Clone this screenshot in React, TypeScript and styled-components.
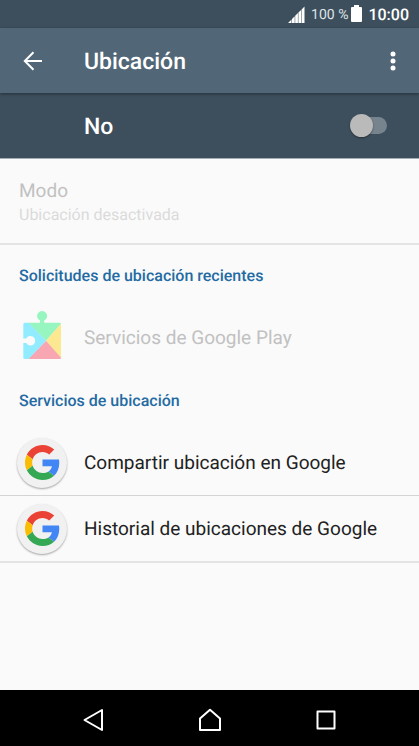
import React from "react";
import styled, { createGlobalStyle } from "styled-components";

const GlobalStyle = createGlobalStyle`
  *, *::before, *::after { box-sizing: border-box; }
  body {
    margin: 0;
    background: #fafafa;
    font-family: Roboto, "Liberation Sans", sans-serif;
    text-rendering: geometricPrecision;
  }
  h1, h2, p, ul { margin: 0; padding: 0; }
`;

const Screen = styled.div`
  display: flex;
  flex-direction: column;
  min-height: 100vh;
`;

const StatusBar = styled.div`
  display: flex;
  align-items: center;
  justify-content: flex-end;
  height: 28px;
  padding: 0 10px;
  background: #3d4f5d;
  color: #fff;
`;

const Battery = styled.span`
  margin: 0 3px 0 6px;
  padding-top: 2px;
  font-size: 14px;
  line-height: 24px;
  color: #dfe3e6;
`;

const Clock = styled.time`
  margin-left: 6px;
  padding-top: 2px;
  font-size: 16px;
  font-weight: 500;
  line-height: 24px;
`;

const AppBar = styled.header`
  z-index: 1;
  display: flex;
  align-items: center;
  height: 65px;
  padding: 0 16px;
  background: #516777;
  color: #fff;
  box-shadow: 0 1px 3px rgba(0, 0, 0, 0.4);
`;

const Title = styled.h1`
  flex: 1;
  padding: 2px 0 0 34px;
  font-size: 23px;
  font-weight: 500;
  line-height: 32px;
`;

const IconButton = styled.button`
  display: flex;
  align-items: center;
  justify-content: center;
  width: ${(p: { $width: number }) => p.$width}px;
  height: 48px;
  padding: 0;
  border: 0;
  background: none;
  color: #fff;
  cursor: pointer;
`;

const SwitchBar = styled.label`
  display: flex;
  align-items: center;
  justify-content: space-between;
  height: 66px;
  padding: 0 32px 0 84px;
  border-bottom: 1px solid #a3adb5;
  background: #3d4f5d;
  color: #fff;
`;

const SwitchText = styled.span`
  padding-top: 2px;
  font-size: 23px;
  font-weight: 500;
  line-height: 32px;
`;

const Switch = styled.input`
  appearance: none;
  display: flex;
  align-items: center;
  width: 34px;
  height: 17px;
  margin: 0;
  border-radius: 9px;
  background: #77838d;
  cursor: pointer;

  &::before {
    content: "";
    flex: none;
    width: 23px;
    height: 23px;
    margin-left: -3px;
    border-radius: 50%;
    background: #bababa;
    box-shadow: 0 1px 2px rgba(0, 0, 0, 0.4);
  }
  &:checked::before { margin-left: 14px; }
`;

const Main = styled.main`
  flex: 1;
`;

const ModeRow = styled.button`
  display: flex;
  flex-direction: column;
  justify-content: center;
  width: 100%;
  height: 86px;
  padding: 3px 19px 0;
  border: 0;
  border-bottom: 2px solid #e4e4e4;
  background: none;
  font-family: inherit;
  text-align: left;
  text-rendering: inherit;
`;

const ModeName = styled.span`
  font-size: 19px;
  line-height: 24px;
  color: #c1c1c1;
`;

const ModeValue = styled.span`
  font-size: 16px;
  line-height: 24px;
  color: #dadada;
`;

const Category = styled.h2`
  padding: 2px 19px 0;
  font-size: 16px;
  font-weight: 500;
  line-height: 58px;
  color: #246ba3;
`;

const List = styled.ul`
  list-style: none;
`;

const Item = styled.li<{ $divider?: string }>`
  border-bottom: ${(p) => p.$divider ?? "0"};
`;

const ItemButton = styled.button`
  display: flex;
  align-items: center;
  gap: 16px;
  width: 100%;
  height: 65px;
  padding: 0 16px;
  border: 0;
  background: none;
  color: #212121;
  font-family: inherit;
  font-size: 19px;
  line-height: 24px;
  text-align: left;
  text-rendering: inherit;
  cursor: pointer;

  &:disabled {
    color: #c1c1c1;
    cursor: default;
  }
`;

const IconSlot = styled.span`
  display: flex;
  flex: none;
  align-items: center;
  justify-content: center;
  width: 52px;
`;

const Disc = styled.span`
  display: flex;
  align-items: center;
  justify-content: center;
  width: 50px;
  height: 50px;
  border-radius: 50%;
  background: #f1f1f1;
  box-shadow: 0 1px 2px rgba(0, 0, 0, 0.35);
`;

const NavBar = styled.nav`
  display: flex;
  align-items: center;
  justify-content: center;
  gap: 68px;
  height: 56px;
  padding-top: 3px;
  background: #000;
`;

const SignalIcon = () => (
  <svg width="17" height="17" viewBox="0 0 17 17" fill="#fff" aria-hidden="true">
    <path d="M0 17 3.500 13.500V17ZM4 13 6.700 10.300V17H4ZM7.200 9.800 9.900 7.100V17H7.200ZM10.400 6.600 13.100 3.900V17H10.400ZM13.600 3.400 16.500 .500V17H13.600Z" />
  </svg>
);

const BatteryIcon = () => (
  <svg width="11" height="18" viewBox="0 0 11 18" fill="#fff" aria-hidden="true">
    <path d="M3 0H8V2H10Q11 2 11 3V16Q11 17 10 17H1Q0 17 0 16V3Q0 2 1 2H3Z" />
  </svg>
);

const BackArrow = () => (
  <svg width="20" height="20" viewBox="0 0 20 20" fill="none" stroke="#fff" strokeWidth="2" aria-hidden="true">
    <path d="M19 10H2M10.500 1.200 1.800 10 10.500 18.800" />
  </svg>
);

const MoreIcon = () => (
  <svg width="6" height="20" viewBox="0 0 6 20" fill="#fff" aria-hidden="true">
    <circle cx="3" cy="3" r="2.500" />
    <circle cx="3" cy="10" r="2.500" />
    <circle cx="3" cy="17" r="2.500" />
  </svg>
);

const PlayServicesIcon = () => (
  <svg width="40" height="56" viewBox="0 0 40 56" aria-hidden="true">
    <path fill="#97f5c0" d="M6 12.700H18V10.600A5 5 0 1 1 22.200 10.600V12.700H37.500Q39 12.700 39 14L24 30.700Z" />
    <path fill="#fde892" d="M39 13.500V49L24 30.700Z" />
    <path fill="#f8a6b1" d="M6 49 24 30.700 39 47.800Q39 49 37.500 49Z" />
    <path fill="#92ecff" d="M6.500 12.700 24 30.700 6.500 49H2.800Q1.300 49 1.300 47.500V33H4.200A4.800 4.800 0 1 0 4.200 28.400H1.300V14.200Q1.300 12.700 2.800 12.700Z" />
  </svg>
);

const GoogleIcon = () => (
  <svg width="35" height="35" viewBox="0 0 48 48" aria-hidden="true">
    <path fill="#EA4335" d="M24 9.500c3.540 0 6.710 1.220 9.210 3.600l6.850-6.850C35.900 2.380 30.470 0 24 0 14.620 0 6.510 5.380 2.560 13.220l7.980 6.190C12.430 13.720 17.740 9.500 24 9.500z" />
    <path fill="#4285F4" d="M46.980 24.550c0-1.570-.15-3.090-.38-4.550H24v9.020h12.940c-.58 2.960-2.260 5.480-4.780 7.180l7.730 6c4.510-4.180 7.090-10.360 7.090-17.650z" />
    <path fill="#FBBC05" d="M10.530 28.590c-.48-1.450-.76-2.990-.76-4.590s.27-3.140.76-4.590l-7.980-6.190C.92 16.460 0 20.120 0 24c0 3.880.92 7.540 2.560 10.780l7.970-6.190z" />
    <path fill="#34A853" d="M24 48c6.480 0 11.930-2.130 15.890-5.810l-7.730-6c-2.150 1.450-4.920 2.300-8.160 2.300-6.260 0-11.570-4.220-13.470-9.910l-7.980 6.190C6.510 42.620 14.620 48 24 48z" />
  </svg>
);

const NavIcon = ({ d }: { d: string }) => (
  <svg width="24" height="24" viewBox="0 0 24 24" fill="none" stroke="#fff" strokeWidth="2" strokeLinejoin="round" aria-hidden="true">
    <path d={d} />
  </svg>
);

const navItems = [
  { label: "Atrás", d: "M20 2V22L2.500 12Z" },
  { label: "Inicio", d: "M12 1.800 22 10.500V22H2V10.500Z" },
  { label: "Recientes", d: "M3.500 3.500H20.500V20.500H3.500Z" },
];

const services = [
  { name: "Compartir ubicación en Google", divider: "1px solid #d4d4d4" },
  { name: "Historial de ubicaciones de Google", divider: "2px solid #e4e4e4" },
];

export default function App() {
  return (
    <Screen>
      <GlobalStyle />
      <StatusBar>
        <SignalIcon />
        <Battery>100 %</Battery>
        <BatteryIcon />
        <Clock>10:00</Clock>
      </StatusBar>
      <AppBar>
        <IconButton $width={34} aria-label="Volver">
          <BackArrow />
        </IconButton>
        <Title>Ubicación</Title>
        <IconButton $width={20} aria-label="Más opciones">
          <MoreIcon />
        </IconButton>
      </AppBar>
      <SwitchBar htmlFor="location">
        <SwitchText>No</SwitchText>
        <Switch id="location" type="checkbox" role="switch" />
      </SwitchBar>
      <Main>
        <ModeRow disabled>
          <ModeName>Modo</ModeName>
          <ModeValue>Ubicación desactivada</ModeValue>
        </ModeRow>
        <Category>Solicitudes de ubicación recientes</Category>
        <List>
          <Item>
            <ItemButton disabled>
              <IconSlot>
                <PlayServicesIcon />
              </IconSlot>
              Servicios de Google Play
            </ItemButton>
          </Item>
        </List>
        <Category>Servicios de ubicación</Category>
        <List>
          {services.map((s) => (
            <Item key={s.name} $divider={s.divider}>
              <ItemButton>
                <IconSlot>
                  <Disc>
                    <GoogleIcon />
                  </Disc>
                </IconSlot>
                {s.name}
              </ItemButton>
            </Item>
          ))}
        </List>
      </Main>
      <NavBar>
        {navItems.map((n) => (
          <IconButton key={n.label} $width={48} aria-label={n.label}>
            <NavIcon d={n.d} />
          </IconButton>
        ))}
      </NavBar>
    </Screen>
  );
}
